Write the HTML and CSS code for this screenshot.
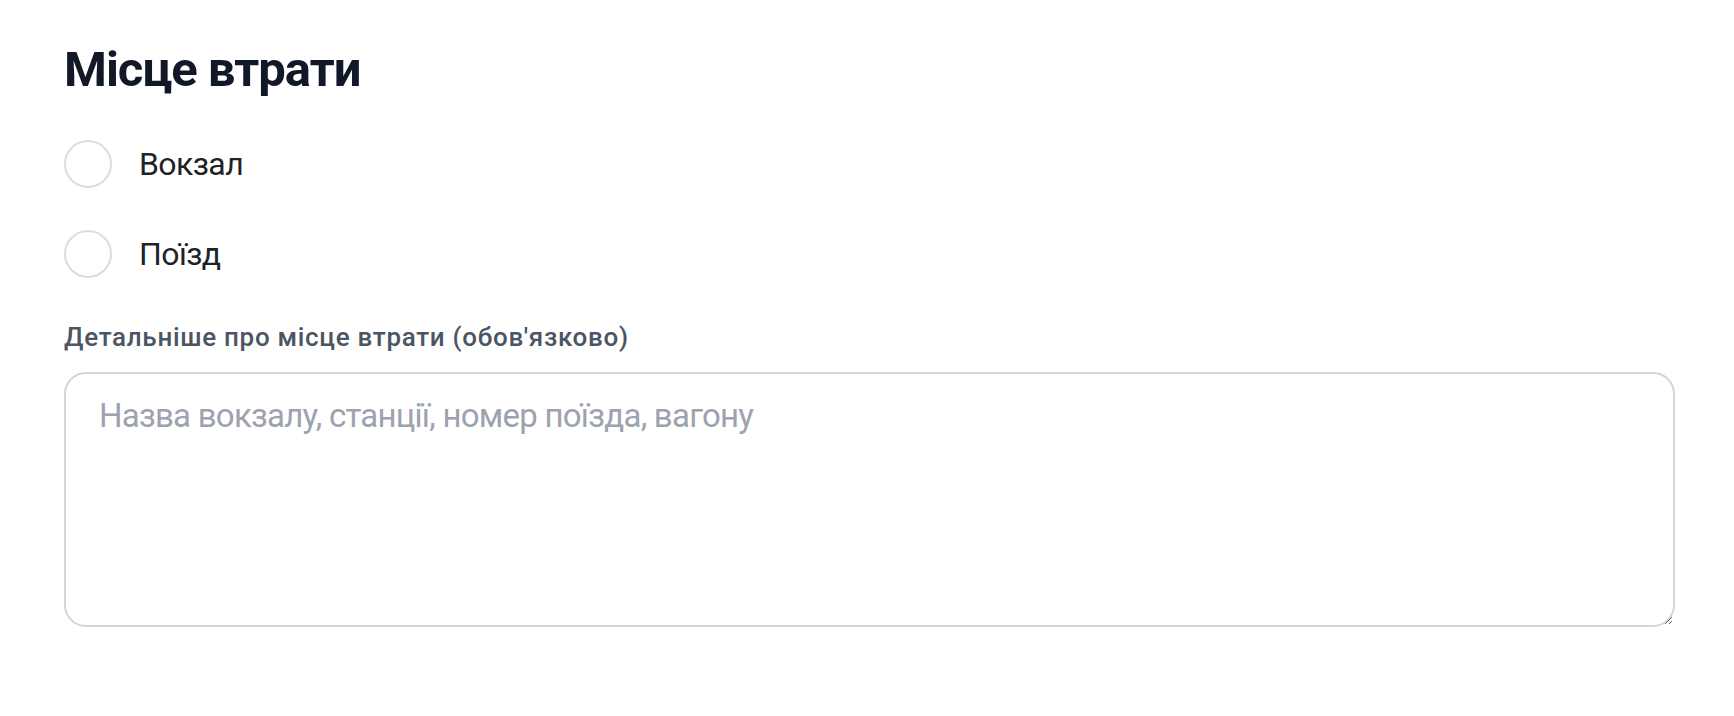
FILE: index.html
```html
<!DOCTYPE html>
<html lang="uk">
<head>
<meta charset="utf-8">
<title>Місце втрати</title>
<link rel="stylesheet" href="styles.css">
</head>
<body>
<section class="form">
  <h2 class="title">Місце втрати</h2>
  <div class="radios">
    <label class="radio"><span class="circle"></span><span class="radio-text">Вокзал</span></label>
    <label class="radio"><span class="circle"></span><span class="radio-text">Поїзд</span></label>
  </div>
  <label class="field-label" for="details">Детальніше про місце втрати (обов'язково)</label>
  <textarea id="details" class="details" placeholder="Назва вокзалу, станції, номер поїзда, вагону"></textarea>
</section>
</body>
</html>
```
FILE: styles.css
```css
html, body {
  margin: 0;
  background: #ffffff;
}
body {
  font-family: Roboto, "Noto Sans", sans-serif;
}
.form {
  padding: 42px 59px 0 64px;
  display: flex;
  flex-direction: column;
}
.title {
  margin: 0;
  font-size: 49px;
  line-height: 56px;
  font-weight: 700;
  letter-spacing: -1px;
  color: #111827;
}
.radios {
  display: flex;
  flex-direction: column;
  gap: 42px;
  margin-top: 42px;
}
.radio {
  display: flex;
  align-items: center;
  gap: 27px;
  height: 48px;
}
.circle {
  width: 44px;
  height: 44px;
  border: 2px solid #dcdcdc;
  border-radius: 50%;
  flex: none;
}
.radio-text {
  font-size: 32px;
  letter-spacing: -0.6px;
  color: #1f2328;
}
.field-label {
  margin-top: 44px;
  font-size: 26px;
  line-height: 30px;
  font-weight: 500;
  letter-spacing: 0.7px;
  color: #4b5563;
}
.details {
  margin-top: 20px;
  height: 255px;
  box-sizing: border-box;
  border: 2px solid #d1d5db;
  border-radius: 22px;
  padding: 22px 33px;
  font-family: Roboto, "Noto Sans", sans-serif;
  font-size: 33px;
  letter-spacing: -0.75px;
  color: #111827;
  resize: vertical;
  outline: none;
}
.details::placeholder {
  color: #9ca3af;
}
```
